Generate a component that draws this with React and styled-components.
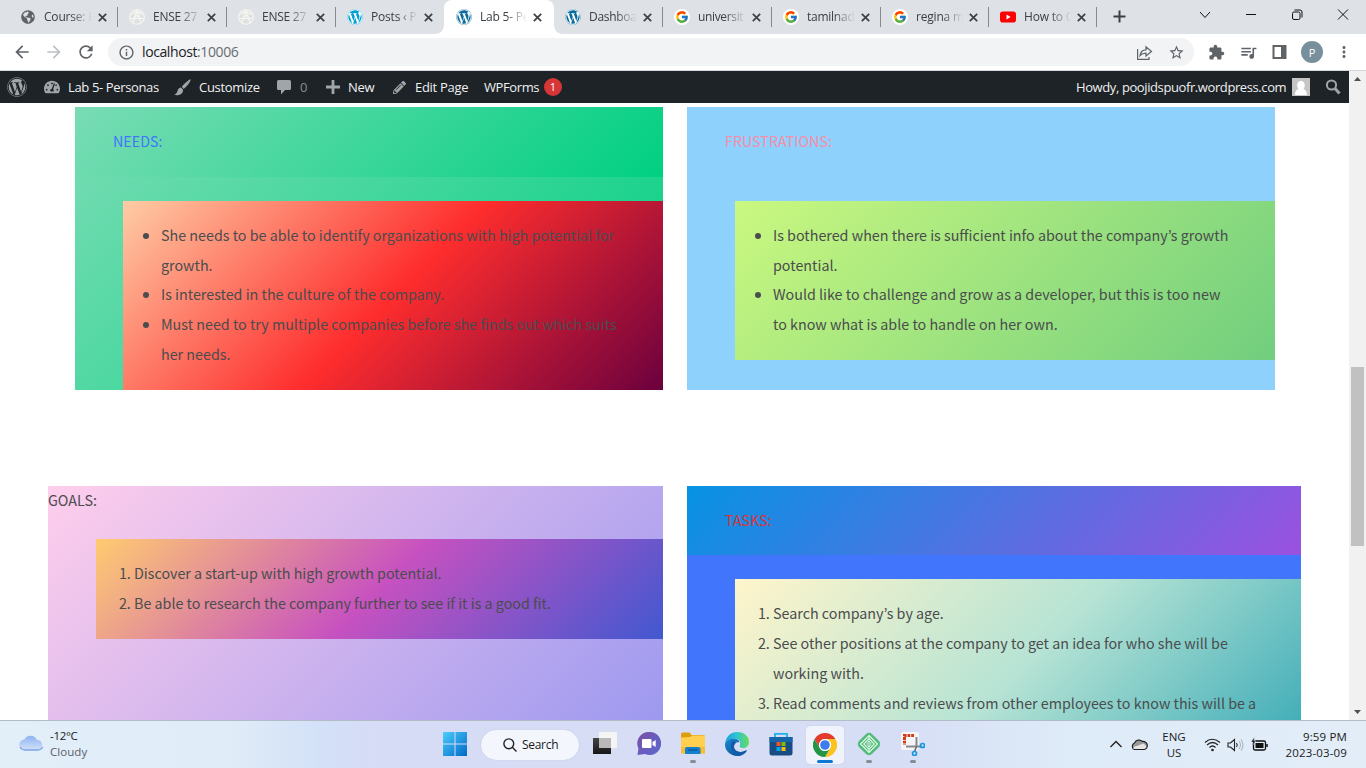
import React from "react";
import styled, { createGlobalStyle } from "styled-components";
import { FaWordpress, FaTachometerAlt, FaPencilAlt, FaGlobeAmericas } from "react-icons/fa";
import { FcGoogle } from "react-icons/fc";
import {
  MdArrowBack, MdArrowForward, MdRefresh, MdInfoOutline, MdExtension, MdQueueMusic, MdStarBorder, MdMoreVert,
} from "react-icons/md";

const ui = `"Segoe UI", "Open Sans", "Noto Sans", sans-serif`;
const body = `"Source Sans Pro", "Noto Sans CJK KR", sans-serif`;

const Global = createGlobalStyle`
  * { box-sizing: border-box; }
  html, body { margin: 0; height: 100%; overflow: hidden; background: #fff; }
  svg { display: block; flex: none; }
`;

const Screen = styled.div`
  width: 1366px;
  height: 768px;
  display: flex;
  flex-direction: column;
  overflow: hidden;
  font-family: ${ui};
`;

/* ---------- browser tabs ---------- */
const TabStrip = styled.div`
  display: flex;
  height: 34px;
  flex: none;
  background: #dee1e6;
  padding-left: 9px;
`;
const Tab = styled.div`
  display: flex;
  align-items: center;
  width: ${(p) => p.$w || 109}px;
  height: 34px;
  padding: 0 0 0 ${(p) => (p.$active ? 12 : 11)}px;
  position: relative;
  border-radius: 8px 8px 0 0;
  background: ${(p) => (p.$active ? "#fff" : "transparent")};
  &::before, &::after {
    content: "";
    display: ${(p) => (p.$active ? "block" : "none")};
    position: absolute;
    bottom: 0;
    width: 8px;
    height: 8px;
  }
  &::before { left: -8px; background: radial-gradient(circle at 0 0, transparent 7.5px, #fff 8px); }
  &::after { right: -8px; background: radial-gradient(circle at 100% 0, transparent 7.5px, #fff 8px); }
`;
const TabTitle = styled.span`
  width: ${(p) => (p.$active ? 48 : 49)}px;
  margin-left: 8px;
  overflow: hidden;
  white-space: nowrap;
  font-size: 12px;
  letter-spacing: ${(p) => p.$ls ?? -0.2}px;
  line-height: 18px;
  color: #3c4043;
  -webkit-mask-image: linear-gradient(90deg, #000 54%, transparent 98%);
  mask-image: linear-gradient(90deg, #000 54%, transparent 98%);
`;
const TabClose = styled.svg`
  margin-left: 5px;
`;
const TabDivider = styled.i`
  width: 1px;
  height: 20px;
  margin-left: 10px;
  background: ${(p) => (p.$hide ? "transparent" : "#868a90")};
`;
const Favicon = styled.span`
  display: flex;
  align-items: center;
  justify-content: center;
  width: 16px;
  height: 16px;
  flex: none;
  border-radius: 50%;
  color: ${(p) => p.$color || "#5f6368"};
  background: ${(p) => p.$bg || "transparent"};
`;
const WindowControls = styled.div`
  display: flex;
  margin-left: auto;
  height: 30px;
  align-items: center;
  gap: 34px;
  padding-right: 17px;
`;
const NewTab = styled.svg`
  margin: 10px 0 0 16px;
`;

/* ---------- toolbar ---------- */
const Toolbar = styled.div`
  display: flex;
  align-items: center;
  height: 37px;
  flex: none;
  padding: 0 12px;
  background: #fff;
  border-bottom: 1px solid #d5d8dc;
  color: #5f6368;
`;
const NavButtons = styled.div`
  display: flex;
  gap: 12px;
  width: 96px;
  svg:nth-child(2) { color: #bdc0c4; }
`;
const AddressBar = styled.div`
  display: flex;
  align-items: center;
  width: 1086px;
  height: 28px;
  padding: 0 9px 0 10px;
  border-radius: 14px;
  background: #f1f3f4;
`;
const Url = styled.span`
  margin-left: 7px;
  font-size: 14px;
  line-height: 20px;
  letter-spacing: -0.4px;
  color: #696d72;
  b { font-weight: 400; color: #202124; }
`;
const AddressActions = styled.div`
  display: flex;
  gap: 15px;
  margin-left: auto;
`;
const Extensions = styled.div`
  display: flex;
  align-items: center;
  margin-left: 14px;
  gap: 14px;
`;
const Profile = styled.span`
  display: flex;
  align-items: center;
  justify-content: center;
  width: 22px;
  height: 22px;
  margin-right: -2px;
  border-radius: 50%;
  background: #78909c;
  color: #fff;
  font-size: 11px;
`;

/* ---------- page area ---------- */
const Viewport = styled.div`
  display: flex;
  height: 649px;
  flex: none;
`;
const Page = styled.div`
  width: 1349px;
  overflow: hidden;
`;
const AdminBar = styled.div`
  display: flex;
  align-items: center;
  height: 32px;
  padding: 0 8px 0 7px;
  background: #1d2327;
  color: #a0a5aa;
`;
const SiteMenu = styled.span`
  display: flex;
  width: 37px;
`;
const AdminLabel = styled.span`
  width: ${(p) => p.$w}px;
  margin-left: ${(p) => p.$gap ?? 8}px;
  white-space: nowrap;
  font-size: 13px;
  line-height: 32px;
  letter-spacing: ${(p) => p.$ls ?? -0.3}px;
  color: ${(p) => p.$color || "#f0f0f1"};
`;
const Count = styled.span`
  width: 18px;
  height: 18px;
  border-radius: 9px;
  background: #d63638;
  color: #fff;
  font-size: 11px;
  line-height: 18px;
  text-align: center;
`;
const AdminRight = styled.div`
  display: flex;
  align-items: center;
  margin-left: auto;
`;

const Row = styled.div`
  display: flex;
  gap: 24px;
  padding-left: ${(p) => p.$left}px;
  margin-top: ${(p) => p.$top}px;
`;
const Card = styled.section`
  width: ${(p) => p.$w}px;
  height: ${(p) => p.$h}px;
  background: ${(p) => p.$bg};
  font-family: ${body};
  font-size: 14.3px;
  line-height: 29.7px;
  color: #4a4c4e;
`;
const CardTitle = styled.div`
  height: ${(p) => p.$h || 70}px;
  padding: ${(p) => (p.$flush ? "0" : "19px 38px")};
  line-height: ${(p) => (p.$flush ? 28 : 29.7)}px;
  background: ${(p) => p.$bg || "transparent"};
  color: ${(p) => p.$color || "inherit"};
`;
const List = styled.ul`
  list-style: ${(p) => p.$marker || "disc"};
  margin: 24px 0 0 48px;
  padding: 19px 0 21.2px 38px;
  background: ${(p) => p.$bg};
  white-space: nowrap;
`;

const Scrollbar = styled.div`
  display: flex;
  flex-direction: column;
  align-items: center;
  justify-content: space-between;
  width: 17px;
  padding: 6px 0;
  background: #f1f1f1;
`;
const Thumb = styled.div`
  width: 13px;
  height: 179px;
  margin-top: 122px;
  background: #c1c1c1;
`;

/* ---------- taskbar ---------- */
const Taskbar = styled.div`
  display: flex;
  height: 48px;
  flex: none;
  border-top: 1px solid #b3bac8;
  background: linear-gradient(90deg, #e2eef8 0, #e0ecf8 230px, #d3e1f8 320px, #d6dcf5 380px, #d6def5 900px, #deebf8 1070px, #e2edf8 1366px);
  color: #1b1b1b;
  font-size: 12px;
`;
const Weather = styled.div`
  display: flex;
  width: 437px;
  padding: 7px 0 0 18px;
  line-height: 16px;
  font-size: 11.5px;
  letter-spacing: -0.3px;
  svg { margin-top: 5px; margin-right: 6px; }
  span { color: #5a6068; letter-spacing: 0.05px; }
`;
const Apps = styled.div`
  display: flex;
  align-items: center;
  width: 640px;
`;
const AppButton = styled.div`
  display: flex;
  flex-direction: column;
  align-items: center;
  width: ${(p) => p.$w || 44}px;
  height: 47px;
  padding-top: 11px;
`;
const ActiveApp = styled(AppButton)`
  width: 38px;
  height: 38px;
  margin: 0 3px;
  padding-top: 7px;
  border-radius: 4px;
  background: #f0f3fc;
  box-shadow: 0 0 1px #aab4cc;
`;
const Running = styled.i`
  width: ${(p) => (p.$on ? 16 : 6)}px;
  height: 3px;
  margin-top: ${(p) => (p.$on ? 3 : 4)}px;
  border-radius: 2px;
  background: ${(p) => (p.$on ? "#0b78d4" : "#868b96")};
`;
const SearchPill = styled.div`
  display: flex;
  align-items: center;
  width: 98px;
  height: 30px;
  margin: 0 4px 0 9px;
  padding-left: 22px;
  gap: 5px;
  border-radius: 15px;
  background: #f3f6fd;
  box-shadow: 0 0 1px #a9b2c8;
  letter-spacing: -0.3px;
`;
const Tray = styled.div`
  display: flex;
  align-items: center;
  margin-left: auto;
  padding-right: 19px;
`;
const Stack = styled.div`
  width: ${(p) => p.$w}px;
  text-align: ${(p) => p.$align};
  font-size: 11.5px;
  line-height: 16px;
  letter-spacing: ${(p) => p.$ls ?? 0}px;
`;

const GlobeIcon = () => <Favicon><FaGlobeAmericas size={14} /></Favicon>;
const CampusIcon = () => (
  <Favicon $bg="#dfe2e2">
    <svg width="16" height="16" viewBox="0 0 16 16" fill="none" stroke="#f7f8f3" strokeWidth="1.100">
      <circle cx="8" cy="8" r="7.300" /><path d="M8 2 4 13.500M8 2l4 11.500M1.500 9.500h13M5.500 9.500C5.500 6 10.500 6 10.500 9.500M3 5.500 8 2l5 3.500" />
    </svg>
  </Favicon>
);
const WpIcon = ({ color }) => <Favicon $bg="#fff" $color={color}><FaWordpress size={16} /></Favicon>;
const GoogleIcon = () => <Favicon $bg="#fff"><FcGoogle size={14} /></Favicon>;
const YoutubeIcon = () => (
  <svg width="16" height="16" viewBox="0 0 16 16"><rect y="2.500" width="16" height="11" rx="2.800" fill="#f00" /><path d="M6.500 5.600v4.800L10.600 8z" fill="#fff" /></svg>
);

const tabs = [
  { title: "Course: E", icon: <GlobeIcon /> },
  { title: "ENSE 27", icon: <CampusIcon />, ls: -0.25 },
  { title: "ENSE 27", icon: <CampusIcon />, ls: -0.25 },
  { title: "Posts ‹ P", icon: <WpIcon color="#00a0d2" />, hide: true, w: 108 },
  { title: "Lab 5- Pe", icon: <WpIcon color="#0a6b9c" />, active: true, hide: true, w: 110 },
  { title: "Dashboa", icon: <WpIcon color="#0a6b9c" />, ls: -0.3 },
  { title: "universit", icon: <GoogleIcon />, ls: -0.35 },
  { title: "tamilnad", icon: <GoogleIcon />, ls: -0.25 },
  { title: "regina m", icon: <GoogleIcon />, w: 108 },
  { title: "How to C", icon: <YoutubeIcon />, w: 108 },
];

function BrowserTabs() {
  return (
    <TabStrip>
      {tabs.map((t, i) => (
        <Tab key={i} $active={t.active} $w={t.w}>
          {t.icon}
          <TabTitle $ls={t.ls} $active={t.active}>{t.title}</TabTitle>
          <TabClose width="9" height="9" viewBox="0 0 9 9" stroke="#3c4043" strokeWidth="1.700"><path d="M.8.8l7.400 7.400M8.200.8.8 8.200" /></TabClose>
          <TabDivider $hide={t.hide} />
        </Tab>
      ))}
      <NewTab width="13" height="13" viewBox="0 0 13 13" stroke="#3c4043" strokeWidth="2"><path d="M6.500.5v12M.5 6.500h12" /></NewTab>
      <WindowControls>
        <svg width="12" height="12" viewBox="0 0 12 12" fill="none" stroke="#111"><path d="m1 3 5 5.500L11 3" /></svg>
        <svg width="12" height="12" viewBox="0 0 12 12" stroke="#111"><path d="M1 5.500h10" /></svg>
        <svg width="12" height="12" viewBox="0 0 12 12" fill="none" stroke="#111"><rect x="1.500" y="3" width="7.500" height="7.500" rx="1.500" /><path d="M3.500 1h5.500a2 2 0 0 1 2 2v5.500" /></svg>
        <svg width="12" height="12" viewBox="0 0 12 12" stroke="#111"><path d="m1 .5 10 10M11 .5l-10 10" /></svg>
      </WindowControls>
    </TabStrip>
  );
}

function BrowserToolbar() {
  return (
    <Toolbar>
      <NavButtons><MdArrowBack size={20} /><MdArrowForward size={20} /><MdRefresh size={20} /></NavButtons>
      <AddressBar>
        <MdInfoOutline size={17} />
        <Url><b>localhost</b>:10006</Url>
        <AddressActions>
          <svg width="17" height="17" viewBox="0 0 17 17" fill="none" stroke="#5f6368" strokeWidth="1.200"><path d="M1.600 5v10.400H13V13M4 11.500c.6-4 3-5.700 6-5.700V2.800l5.500 4.700-5.500 4.500V9.200c-2.500 0-4.500.5-6 2.300z" /></svg>
          <MdStarBorder size={17} />
        </AddressActions>
      </AddressBar>
      <Extensions>
        <MdExtension size={17} />
        <MdQueueMusic size={19} />
        <svg width="15" height="14" viewBox="0 0 15 14"><path d="M.5 0h14v14H.5zM2.500 2v10H9V2z" fill="#5f6368" fillRule="evenodd" /></svg>
        <Profile>P</Profile>
        <MdMoreVert size={18} />
      </Extensions>
    </Toolbar>
  );
}

function WordPressBar() {
  return (
    <AdminBar>
      <SiteMenu><FaWordpress size={20} /></SiteMenu>
      <FaTachometerAlt size={16} />
      <AdminLabel $w={106} $ls={-0.36}>Lab 5- Personas</AdminLabel>
      <svg width="17" height="17" viewBox="0 0 17 17" fill="#a0a5aa"><path d="M16.500.3c-1 0-7 4.800-8.700 7.500l1.900 2.100C12.500 8 17.500 1.500 16.500.3zM6.800 8.600c-2.200.3-2.800 1.700-3.300 3.500C3.100 13.700 2 15 .3 15.800c3 .9 7.700.4 8.600-3.200l.1-2z" /></svg>
      <AdminLabel $w={78}>Customize</AdminLabel>
      <svg width="14" height="16" viewBox="0 0 14 16" fill="#a0a5aa"><path d="M1.500 1h11q1.500 0 1.500 1.500v7q0 1.500-1.500 1.500H8l-4 4.500V11H1.500Q0 11 0 9.500v-7Q0 1 1.500 1z" /></svg>
      <AdminLabel $w={26} $gap={9} $color="#888d92">0</AdminLabel>
      <svg width="14" height="14" viewBox="0 0 14 14" stroke="#a0a5aa" strokeWidth="2.800"><path d="M7 0v14M0 7h14" /></svg>
      <AdminLabel $w={45}>New</AdminLabel>
      <FaPencilAlt size={13} />
      <AdminLabel $w={69} $gap={9}>Edit Page</AdminLabel>
      <AdminLabel $w={60} $gap={0} $ls={-0.4}>WPForms</AdminLabel>
      <Count>1</Count>
      <AdminRight>
        <AdminLabel $w={216} $ls={-0.4}>Howdy, poojidspuofr.wordpress.com</AdminLabel>
        <svg width="18" height="18" viewBox="0 0 18 18"><path d="M0 0h18v18H0z" fill="#c5c5c5" /><path d="M3 17c0-4 1.500-5 3.500-6C4 8 5 3 9 3s5 5 2.500 8c2 1 3.500 2 3.500 6z" fill="#fff" /></svg>
        <svg width="31" height="18" viewBox="-15.500 -.5 31 18" fill="none" stroke="#a0a5aa"><circle cx="6" cy="6.500" r="4.600" strokeWidth="2" /><path d="m9.500 10 4.500 5" strokeWidth="3" /></svg>
      </AdminRight>
    </AdminBar>
  );
}

const green = "linear-gradient(135deg, rgb(122,220,180) 0%, rgb(0,208,130) 100%)";

function Personas() {
  return (
    <>
      <Row $left={75} $top={4}>
        <Card $w={588} $h={283} $bg={green}>
          <CardTitle $bg={green} $color="#4175fc">NEEDS:</CardTitle>
          <List $bg="linear-gradient(135deg, rgb(254,205,165) 0%, rgb(254,45,45) 50%, rgb(107,0,62) 100%)">
            <li>She needs to be able to identify organizations with high potential for<br />growth.</li>
            <li>Is interested in the culture of the company.</li>
            <li>Must need to try multiple companies before she finds out which suits<br />her needs.</li>
          </List>
        </Card>
        <Card $w={588} $h={283} $bg="#8ed1fc">
          <CardTitle $color="#f78da7">FRUSTRATIONS:</CardTitle>
          <List $bg="linear-gradient(135deg, rgb(202,248,128) 0%, rgb(113,206,126) 100%)">
            <li>Is bothered when there is sufficient info about the company’s growth<br />potential.</li>
            <li>Would like to challenge and grow as a developer, but this is too new<br />to know what is able to handle on her own.</li>
          </List>
        </Card>
      </Row>
      <Row $left={48} $top={96}>
        <Card $w={615} $h={282} $bg="linear-gradient(135deg, rgb(255,206,236) 0%, rgb(152,150,240) 100%)">
          <CardTitle $flush $h={29}>GOALS:</CardTitle>
          <List as="ol" $marker="decimal" $bg="linear-gradient(135deg, rgb(255,203,112) 0%, rgb(199,81,192) 50%, rgb(65,88,208) 100%)">
            <li>Discover a start-up with high growth potential.</li>
            <li>Be able to research the company further to see if it is a good fit.</li>
          </List>
        </Card>
        <Card $w={614} $h={282} $bg="#4175fc">
          <CardTitle $h={69.4} $bg="linear-gradient(135deg, rgb(6,147,227) 0%, rgb(155,81,224) 100%)" $color="#d9343c">TASKS:</CardTitle>
          <List as="ol" $marker="decimal" $bg="linear-gradient(135deg, rgb(255,245,203) 0%, rgb(182,227,212) 50%, rgb(51,167,181) 100%)">
            <li>Search company’s by age.</li>
            <li>See other positions at the company to get an idea for who she will be<br />working with.</li>
            <li>Read comments and reviews from other employees to know this will be a<br />&nbsp;</li>
          </List>
        </Card>
      </Row>
    </>
  );
}

function WindowsTaskbar() {
  return (
    <Taskbar>
      <Weather>
        <svg width="26" height="20" viewBox="0 0 26 20">
          <defs><linearGradient id="cloud" x2="0" y2="1"><stop stopColor="#8eb3ef" /><stop offset="1" stopColor="#d4e2fa" /></linearGradient></defs>
          <path d="M7 17.500a5.500 5.500 0 0 1-.6-11A7 7 0 0 1 19 7a5.300 5.300 0 0 1 1 10.500z" fill="url(#cloud)" /><path d="M2 14q2 3 5 3h13q3 0 4.800-3" fill="none" stroke="#7fa4e8" strokeWidth="1.300" />
        </svg>
        <div>-12°C<br /><span>Cloudy</span></div>
      </Weather>
      <Apps>
        <AppButton $w={35}>
          <svg width="24" height="24" viewBox="0 0 24 24"><defs><linearGradient id="win" x2="1" y2="1"><stop stopColor="#4ccdfb" /><stop offset="1" stopColor="#0069c9" /></linearGradient></defs><path d="M0 0h11.500v11.500H0zM12.500 0H24v11.500H12.500zM0 12.500h11.500V24H0zM12.500 12.500H24V24H12.500z" fill="url(#win)" /></svg>
        </AppButton>
        <SearchPill>
          <svg width="14" height="14" viewBox="0 0 14 14" fill="none" stroke="#222" strokeWidth="1.400"><circle cx="5.800" cy="5.800" r="4.900" /><path d="m9.300 9.300 4.200 4.200" /></svg>
          Search
        </SearchPill>
        <AppButton>
          <svg width="25" height="23" viewBox="0 0 25 23"><defs><linearGradient id="dark" x2="0" y2="1"><stop stopColor="#444" /><stop offset="1" stopColor="#161616" /></linearGradient></defs><path d="M0 6h18v16H0z" fill="url(#dark)" /><path d="M6 0h18v16H6z" fill="#f5f5f5" /><path d="M6 6h12v10H6z" fill="#b9b9b9" /></svg>
        </AppButton>
        <AppButton>
          <svg width="24" height="24" viewBox="0 0 24 24"><defs><linearGradient id="chat" x2="1" y2="1"><stop stopColor="#7a4fa6" /><stop offset="1" stopColor="#5b68d2" /></linearGradient></defs><path d="M12 0a11.500 11.500 0 1 1-4 22L.5 23l.9-6.500A11.500 11.500 0 0 1 12 0z" fill="url(#chat)" /><rect x="5" y="7" width="9.500" height="9" rx="1" fill="#fff" /><path d="m15.500 10 3.200-2v7l-3.200-2z" fill="#fff" /></svg>
        </AppButton>
        <AppButton>
          <svg width="26" height="24" viewBox="0 0 26 24"><path d="M1 2Q1 .5 2.500.5h7l2 2.500h12q1.500 0 1.500 1.500V12H1z" fill="#dd9e0a" /><path d="M1 5.500 10 5l2-1.500h13V21.500H1z" fill="#ffd04f" /><path d="M1 15h24v6.500H1z" fill="#f8bd30" /><path d="M5 22v-5q0-2 2-2h11q2.500 0 2.500 2v5z" fill="#147fcd" /><path d="M8 18h9.500" stroke="#0a559e" strokeWidth="1.300" /></svg>
          <Running />
        </AppButton>
        <AppButton>
          <svg width="24" height="24" viewBox="0 0 24 24">
            <defs><linearGradient id="edgeTop"><stop stopColor="#1c9fe2" /><stop offset=".5" stopColor="#2fc5cf" /><stop offset="1" stopColor="#68dd56" /></linearGradient><linearGradient id="edgeLow" x2="1" y2="1"><stop stopColor="#188dd5" /><stop offset="1" stopColor="#0a448b" /></linearGradient></defs>
            <path d="M0 12C1 4 6 0 12 0c8 0 12 5 12 10 0 4-3 6-6 6-2.500 0-4-1-3-3 1-4-1.500-6.500-5-6.500C4 6.500 1 9 0 12z" fill="url(#edgeTop)" />
            <path d="M0 12c1-3.500 5-5.500 9-5.500 3 0 5 1.500 5.500 4-3-1-5.500 1-5.500 4 0 4 5 6.500 9 5 2-.6 3.500-1.500 4-1-2 3.500-5.500 5.500-10 5.500C5 24-.5 18 0 12z" fill="url(#edgeLow)" />
            <path d="M7 9c-3 6 0 13 6 14.700 3 .2 7-1.700 8.500-4.700-5 3-12 1-12.500-4 0-2 .5-3 1.800-4C10 9.500 8 8.500 7 9z" fill="#145ba9" />
          </svg>
        </AppButton>
        <AppButton>
          <svg width="24" height="25" viewBox="0 0 24 25"><path d="M6 6V1.800h12V6" fill="none" stroke="#22afeb" strokeWidth="1.800" /><path d="M.5 5h23v16q0 2.500-2.500 2.500H3Q.5 23.500.5 21z" fill="#174c85" /><path d="M.5 5h23v5H.5z" fill="#1765a8" /><path d="M7.500 10h4v4h-4z" fill="#f35325" /><path d="M12.500 10h4v4h-4z" fill="#81bc06" /><path d="M7.500 15h4v4h-4z" fill="#05a6f0" /><path d="M12.500 15h4v4h-4z" fill="#ffba08" /></svg>
        </AppButton>
        <ActiveApp>
          <svg width="24" height="24" viewBox="0 0 24 24"><path d="M1.600 6A12 12 0 0 1 22.400 6H12a6 6 0 0 0-5.200 9z" fill="#e33b2e" /><path d="M22.400 6A12 12 0 0 1 12 24l5.200-9A6 6 0 0 0 12 6z" fill="#fcc31e" /><path d="M1.600 6A12 12 0 0 0 12 24l5.200-9a6 6 0 0 1-10.400 0z" fill="#259447" /><circle cx="12" cy="12" r="6" fill="#fff" /><circle cx="12" cy="12" r="4.800" fill="#3b7ded" /></svg>
          <Running $on />
        </ActiveApp>
        <AppButton>
          <svg width="24" height="24" viewBox="0 0 24 24" fill="none"><rect x="2.800" y="2.800" width="18.400" height="18.400" rx="4.500" transform="rotate(45 12 12)" fill="#51bb7b" /><path d="m12 3.500 8.500 8.500-8.500 8.500L3.500 12zM12 6.700l5.300 5.300-5.300 5.300L6.700 12z" stroke="#e5fae9" strokeWidth="1.100" /><path d="M12 3.500v5M12 15.500v5M9.500 11h5M9.500 13h5M11 9.500h2M11 14.500h2" stroke="#e5fae9" /></svg>
          <Running />
        </AppButton>
        <AppButton>
          <svg width="24" height="24" viewBox="0 0 24 24" fill="none"><rect width="18" height="18" rx="2" fill="#f5f5f7" /><path d="M13 3.500H3.500V13" stroke="#d23c14" strokeWidth="3" strokeDasharray="2.800 .9" /><path d="M15.500 5v9.500H21M5 14.500h10.500" stroke="#85898f" strokeWidth="2" /><path d="m13.500 19.500 2-5" stroke="#666" strokeWidth="1.500" /><circle cx="21.500" cy="13.500" r="2" stroke="#1797dc" strokeWidth="1.700" /><circle cx="13.500" cy="21.500" r="2" stroke="#1797dc" strokeWidth="1.700" /></svg>
          <Running />
        </AppButton>
      </Apps>
      <Tray>
        <svg width="12" height="12" viewBox="0 0 12 12" fill="none" stroke="#222" strokeWidth="1.400"><path d="m.5 8 5.500-5.500L11.500 8" /></svg>
        <svg width="35" height="16" viewBox="-9 0 35 16"><path d="M4 13.500a3.500 3.500 0 0 1 0-6.500A5 5 0 0 1 12 5.500a4 4 0 0 1 1.500 8z" transform="translate(-.5 -1)" fill="#999" stroke="#222" strokeWidth="1.200" /><path d="M2 11.500q1-3 4-2.500l6-2.500q3 1 3.500 3.500-1 2-3 2H4z" fill="#e5e5e5" /></svg>
        <Stack $w={34} $align="center" $ls={-0.05}>ENG<br />US</Stack>
        <svg width="33" height="16" viewBox="-13 0 33 16" fill="none" stroke="#222" strokeWidth="1.200"><path d="M1 5.500q7-6.500 15 0M3 8q5.500-5 11 0M5.500 10.500q3-3 6 0" /><circle cx="8.500" cy="13" r="1.300" fill="#222" stroke="none" /></svg>
        <svg width="20" height="16" viewBox="-3 0 20 16" fill="none" stroke="#222" strokeWidth="1.100"><path d="M1 6v4h2.500L7.500 13.500v-11L3.500 6z" /><path d="M9.500 6q1.500 2 0 4" /><path d="M12 4q3 4 0 8M14 2.500q4 5.500 0 11" stroke="#aeb6bf" /></svg>
        <svg width="25" height="16" viewBox="-7 0 25 16" fill="none" stroke="#111"><rect x="2.500" y="4" width="12" height="9" rx="1.500" strokeWidth="1.300" /><path d="M4.500 6h8v5h-8z" fill="#111" stroke="none" /><path d="M16 7v3" strokeWidth="1.500" /><path d="M3.500 0 0 5h2L1 9l4-5H3z" fill="#111" stroke="#e2edf8" strokeWidth=".5" /></svg>
        <Stack $w={78} $align="right" $ls={0.15}>9:59 PM<br />2023-03-09</Stack>
      </Tray>
    </Taskbar>
  );
}

export default function App() {
  return (
    <Screen>
      <Global />
      <BrowserTabs />
      <BrowserToolbar />
      <Viewport>
        <Page>
          <WordPressBar />
          <Personas />
        </Page>
        <Scrollbar>
          <svg width="7" height="4" viewBox="0 0 7 4"><path d="M0 4 3.500 0 7 4z" fill="#505050" /></svg>
          <Thumb />
          <svg width="7" height="4" viewBox="0 0 7 4"><path d="M0 0h7L3.500 4z" fill="#505050" /></svg>
        </Scrollbar>
      </Viewport>
      <WindowsTaskbar />
    </Screen>
  );
}
